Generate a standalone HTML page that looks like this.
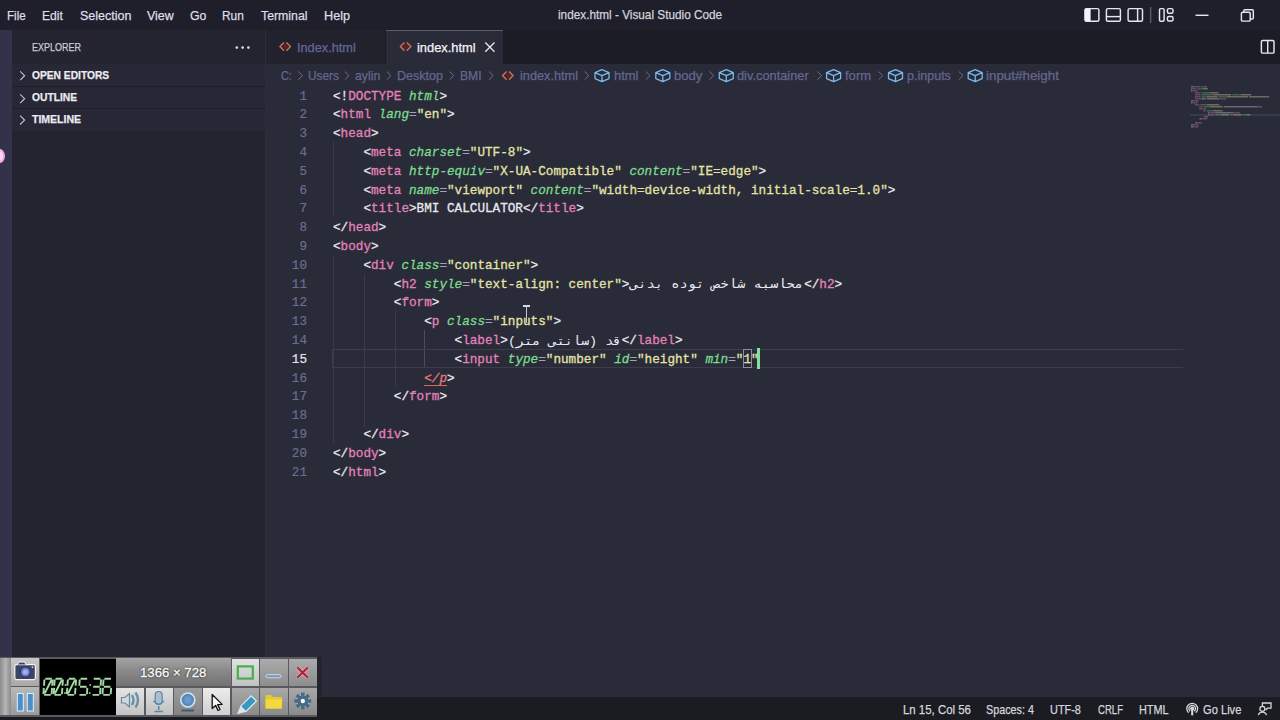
<!DOCTYPE html>
<html><head><meta charset="utf-8">
<style>
*{margin:0;padding:0;box-sizing:border-box}
html,body{width:1280px;height:720px;overflow:hidden;background:#2a2b38;font-family:"Liberation Sans",sans-serif;position:relative}
.b{position:absolute}
.tx{position:absolute;white-space:pre;transform-origin:0 0;-webkit-text-stroke:0.25px currentColor}
.cl{position:absolute;left:332.5px;white-space:pre;font-family:"Liberation Mono",monospace;font-size:13.6px;line-height:13.6px;color:#e9e9f0;transform-origin:0 0;-webkit-text-stroke:0.3px currentColor}
.ln{position:absolute;left:267px;width:40px;text-align:right;white-space:pre;font-family:"Liberation Mono",monospace;font-size:13.6px;line-height:13.6px;transform-origin:100% 0;transform:scaleX(0.93);-webkit-text-stroke:0.2px currentColor}
.t{color:#e482bc}.a{color:#7adc8e;font-style:italic}.s{color:#e4e4a8}.e{color:#a8a0b8}
.err{color:#e67c7a;font-style:italic;text-decoration:underline;text-decoration-color:#d86a62;text-underline-offset:3px}
.ar{position:absolute;white-space:pre;font-family:"Liberation Mono",monospace;font-size:12.5px;line-height:14px;color:#e9e9f0;transform-origin:0 0;direction:rtl;unicode-bidi:isolate}
svg{position:absolute;overflow:visible}
.gd{position:absolute;width:1px;background:#393a4a}
</style></head><body>
<!-- backgrounds -->
<div class="b" style="left:0;top:0;width:1280px;height:30px;background:#1f1f2b"></div>
<div class="b" style="left:0;top:30px;width:12px;height:668px;background:#323348"></div>
<div class="b" style="left:12px;top:30px;width:253px;height:668px;background:#242431"></div>
<div class="b" style="left:12px;top:64px;width:253px;height:67px;background:#272735"></div>
<div class="b" style="left:12px;top:86px;width:253px;height:1px;background:#1d1d27"></div>
<div class="b" style="left:12px;top:108px;width:253px;height:1px;background:#1d1d27"></div>
<div class="b" style="left:265px;top:30px;width:1px;height:668px;background:#2c2c3a"></div>
<div class="b" style="left:266px;top:30px;width:1014px;height:34px;background:#1c1c25"></div>
<div class="b" style="left:266px;top:30px;width:119px;height:34px;background:#22222d"></div>
<div class="b" style="left:385px;top:30px;width:1px;height:34px;background:#1a1a22"></div>
<div class="b" style="left:386px;top:30px;width:117px;height:34px;background:#2a2b38"></div>
<div class="b" style="left:386px;top:30px;width:117px;height:1px;background:#5a5a6e"></div>
<div class="b" style="left:503px;top:30px;width:1px;height:34px;background:#1a1a22"></div>
<div class="b" style="left:0;top:697.4px;width:1280px;height:23px;background:#1b1b22"></div>

<!-- pink ring at left edge -->
<div class="b" style="left:-6px;top:149px;width:11px;height:14px;border-radius:50%;border:2.5px solid #f2a6e6;background:#f8d8f0"></div>

<!-- title bar icons -->
<svg style="left:0;top:0" width="1280" height="64">
 <g fill="none" stroke="#e6e6ee" stroke-width="1.45">
  <rect x="1084.9" y="8.6" width="14" height="12.6" rx="1.5"/>
  <rect x="1085" y="8.8" width="5.6" height="12.2" fill="#f4f4f8" stroke="none"/>
  <rect x="1106.4" y="8.6" width="14" height="12.6" rx="1.5"/>
  <line x1="1106.4" y1="16.6" x2="1120.4" y2="16.6"/>
  <rect x="1128.1" y="8.6" width="14.4" height="12.6" rx="1.5"/>
  <line x1="1137.6" y1="8.6" x2="1137.6" y2="21.2"/>
  <line x1="1150.6" y1="7" x2="1150.6" y2="23" stroke="#5a5a68"/>
  <rect x="1159.5" y="8.6" width="4.6" height="12.6" rx="1.2"/>
  <rect x="1167.4" y="8.6" width="5.6" height="4.6" rx="1.5"/>
  <rect x="1167.4" y="16.4" width="5.6" height="4.6" rx="1.5"/>
  <line x1="1195.5" y1="15.3" x2="1208.5" y2="15.3"/>
  <rect x="1241.4" y="12.3" width="8.8" height="8.8" rx="1.2"/>
  <path d="M1243.8 12.3 V10.8 a1 1 0 0 1 1 -1 H1252.3 a1 1 0 0 1 1 1 V18 a1 1 0 0 1 -1 1 H1250.2"/>
  <!-- split editor -->
  <rect x="1261.4" y="40.5" width="12.6" height="12.6" rx="1.2"/>
  <line x1="1267.7" y1="40.5" x2="1267.7" y2="53.1"/>
 </g>
</svg>

<!-- sidebar icons -->
<svg style="left:0;top:0" width="270" height="140">
 <g fill="#dcdce4"><circle cx="236.8" cy="47.6" r="1.3"/><circle cx="242.6" cy="47.6" r="1.3"/><circle cx="248.4" cy="47.6" r="1.3"/></g>
 <g fill="none" stroke="#c8c8d2" stroke-width="1.1">
  <path d="M20.2 71.3 L24.6 75.7 L20.2 80.1"/>
  <path d="M20.2 94.3 L24.6 98.7 L20.2 103.1"/>
  <path d="M20.2 115.7 L24.6 120.1 L20.2 124.5"/>
 </g>
</svg>

<!-- tab icons -->
<svg style="left:0;top:0" width="1280" height="90">
 <g fill="none" stroke="#bc745c" stroke-width="1.5">
  <path d="M285.2 43.4 L282.4 46.6 L285.2 49.8 L288 46.6 Z" fill="#6e1c1c" stroke="none"/>
  <path d="M405.6 43.4 L402.8 46.6 L405.6 49.8 L408.4 46.6 Z" fill="#6e1c1c" stroke="none"/>
  <path d="M507.8 72.4 L505 75.6 L507.8 78.8 L510.6 75.6 Z" fill="#6e1c1c" stroke="none"/>
  <path d="M284 42.4 L280 46.6 L284 50.8"/><path d="M286.4 42.4 L290.4 46.6 L286.4 50.8"/>
  <path d="M404.4 42.4 L400.4 46.6 L404.4 50.8"/><path d="M406.8 42.4 L410.8 46.6 L406.8 50.8"/>
  <path d="M506.6 71.4 L502.6 75.6 L506.6 79.8"/><path d="M509 71.4 L513 75.6 L509 79.8"/>
 </g>
 <g stroke="#e8e8ee" stroke-width="1.3"><line x1="485.3" y1="42.5" x2="494.5" y2="51.7"/><line x1="494.5" y1="42.5" x2="485.3" y2="51.7"/></g>
 <g fill="none" stroke="#6a6c8e" stroke-width="1">
  <path d="M298.3 71.5 L302.5 75.6 L298.3 79.7"/>
  <path d="M344.8 71.5 L349 75.6 L344.8 79.7"/>
  <path d="M386.8 71.5 L391 75.6 L386.8 79.7"/>
  <path d="M449.6 71.5 L453.8 75.6 L449.6 79.7"/>
  <path d="M489 71.5 L493.2 75.6 L489 79.7"/>
  <path d="M584.6 71.5 L588.8 75.6 L584.6 79.7"/>
  <path d="M645.8 71.5 L650 75.6 L645.8 79.7"/>
  <path d="M709.4 71.5 L713.6 75.6 L709.4 79.7"/>
  <path d="M817.4 71.5 L821.6 75.6 L817.4 79.7"/>
  <path d="M878.6 71.5 L882.8 75.6 L878.6 79.7"/>
  <path d="M958.8 71.5 L963 75.6 L958.8 79.7"/>
 </g>
 <g fill="none" stroke="#79b8f0" stroke-width="1.3" stroke-linejoin="round">
  <g id="cube"><path d="M595 72.6 L602 69.6 L609 72.6 L609 78.6 L602 81.6 L595 78.6 Z M595 72.6 L602 75.6 L609 72.6 M602 75.6 L602 81.6"/></g>
  <use href="#cube" x="60.8"/>
  <use href="#cube" x="124.3"/>
  <use href="#cube" x="231.6"/>
  <use href="#cube" x="293.5"/>
  <use href="#cube" x="373.2"/>
 </g>
</svg>

<!-- indent guides -->
<div class="gd" style="left:333px;top:142px;height:75px"></div>
<div class="gd" style="left:333px;top:255px;height:188px"></div>
<div class="gd" style="left:364px;top:274px;height:153px"></div>
<div class="gd" style="left:394.5px;top:311px;height:76px"></div>
<div class="gd" style="left:424px;top:330px;height:38px;background:#4a4b5c"></div>
<!-- current line -->
<div class="b" style="left:332px;top:349px;width:851px;height:19px;border:1px solid #3c3d4c;border-right:none"></div>

<div class="cl" style="top:89.58px;transform:scaleX(0.9314)">&lt;!<span class="t">DOCTYPE</span> <span class="a">html</span>&gt;</div>
<div class="ln" style="top:89.58px;color:#6a6d92">1</div>
<div class="cl" style="top:108.38px;transform:scaleX(0.9314)">&lt;<span class="t">html</span> <span class="a">lang</span><span class="e">=</span><span class="s">&quot;en&quot;</span>&gt;</div>
<div class="ln" style="top:108.38px;color:#6a6d92">2</div>
<div class="cl" style="top:127.18px;transform:scaleX(0.9314)">&lt;<span class="t">head</span>&gt;</div>
<div class="ln" style="top:127.18px;color:#6a6d92">3</div>
<div class="cl" style="top:145.98px;transform:scaleX(0.9314)">    &lt;<span class="t">meta</span> <span class="a">charset</span><span class="e">=</span><span class="s">&quot;UTF-8&quot;</span>&gt;</div>
<div class="ln" style="top:145.98px;color:#6a6d92">4</div>
<div class="cl" style="top:164.78px;transform:scaleX(0.9314)">    &lt;<span class="t">meta</span> <span class="a">http-equiv</span><span class="e">=</span><span class="s">&quot;X-UA-Compatible&quot;</span> <span class="a">content</span><span class="e">=</span><span class="s">&quot;IE=edge&quot;</span>&gt;</div>
<div class="ln" style="top:164.78px;color:#6a6d92">5</div>
<div class="cl" style="top:183.58px;transform:scaleX(0.9314)">    &lt;<span class="t">meta</span> <span class="a">name</span><span class="e">=</span><span class="s">&quot;viewport&quot;</span> <span class="a">content</span><span class="e">=</span><span class="s">&quot;width=device-width, initial-scale=1.0&quot;</span>&gt;</div>
<div class="ln" style="top:183.58px;color:#6a6d92">6</div>
<div class="cl" style="top:202.38px;transform:scaleX(0.9314)">    &lt;<span class="t">title</span>&gt;BMI CALCULATOR&lt;/<span class="t">title</span>&gt;</div>
<div class="ln" style="top:202.38px;color:#6a6d92">7</div>
<div class="cl" style="top:221.18px;transform:scaleX(0.9314)">&lt;/<span class="t">head</span>&gt;</div>
<div class="ln" style="top:221.18px;color:#6a6d92">8</div>
<div class="cl" style="top:239.98px;transform:scaleX(0.9314)">&lt;<span class="t">body</span>&gt;</div>
<div class="ln" style="top:239.98px;color:#6a6d92">9</div>
<div class="cl" style="top:258.78px;transform:scaleX(0.9314)">    &lt;<span class="t">div</span> <span class="a">class</span><span class="e">=</span><span class="s">&quot;container&quot;</span>&gt;</div>
<div class="ln" style="top:258.78px;color:#6a6d92">10</div>
<div class="cl" style="top:277.58px;transform:scaleX(0.9314)">        &lt;<span class="t">h2</span> <span class="a">style</span><span class="e">=</span><span class="s">&quot;text-align: center&quot;</span>&gt;                       &lt;/<span class="t">h2</span>&gt;</div>
<div class="ln" style="top:277.58px;color:#6a6d92">11</div>
<div class="cl" style="top:296.38px;transform:scaleX(0.9314)">        &lt;<span class="t">form</span>&gt;</div>
<div class="ln" style="top:296.38px;color:#6a6d92">12</div>
<div class="cl" style="top:315.18px;transform:scaleX(0.9314)">            &lt;<span class="t">p</span> <span class="a">class</span><span class="e">=</span><span class="s">&quot;inputs&quot;</span>&gt;</div>
<div class="ln" style="top:315.18px;color:#6a6d92">13</div>
<div class="cl" style="top:333.98px;transform:scaleX(0.9314)">                &lt;<span class="t">label</span>&gt;               &lt;/<span class="t">label</span>&gt;</div>
<div class="ln" style="top:333.98px;color:#6a6d92">14</div>
<div class="cl" style="top:352.78px;transform:scaleX(0.9314)">                &lt;<span class="t">input</span> <span class="a">type</span><span class="e">=</span><span class="s">&quot;number&quot;</span> <span class="a">id</span><span class="e">=</span><span class="s">&quot;height&quot;</span> <span class="a">min</span><span class="e">=</span><span class="s">&quot;1&quot;</span></div>
<div class="ln" style="top:352.78px;color:#e6e6ee">15</div>
<div class="cl" style="top:371.58px;transform:scaleX(0.9314)">            <span class="err">&lt;/p</span>&gt;</div>
<div class="ln" style="top:371.58px;color:#6a6d92">16</div>
<div class="cl" style="top:390.38px;transform:scaleX(0.9314)">        &lt;/<span class="t">form</span>&gt;</div>
<div class="ln" style="top:390.38px;color:#6a6d92">17</div>
<div class="cl" style="top:409.18px;transform:scaleX(0.9314)"></div>
<div class="ln" style="top:409.18px;color:#6a6d92">18</div>
<div class="cl" style="top:427.98px;transform:scaleX(0.9314)">    &lt;/<span class="t">div</span>&gt;</div>
<div class="ln" style="top:427.98px;color:#6a6d92">19</div>
<div class="cl" style="top:446.78px;transform:scaleX(0.9314)">&lt;/<span class="t">body</span>&gt;</div>
<div class="ln" style="top:446.78px;color:#6a6d92">20</div>
<div class="cl" style="top:465.58px;transform:scaleX(0.9314)">&lt;/<span class="t">html</span>&gt;</div>
<div class="ln" style="top:465.58px;color:#6a6d92">21</div>
<div class="ar" style="left:629.5px;top:278.40px;transform:scaleX(1.095)" title="173.0">محاسبه شاخص توده بدنی</div>
<div class="ar" style="left:507.8px;top:334.80px;transform:scaleX(1.075)" title="113.2">قد (سانتی متر)</div>

<!-- bracket box + cursor -->
<div class="b" style="left:743.2px;top:348.6px;width:8.8px;height:19.6px;border:1px solid #8a8ca6"></div>
<div class="b" style="left:757.4px;top:348px;width:2.4px;height:21px;background:#7fe0a0"></div>
<!-- I-beam -->
<div class="b" style="left:523px;top:305.2px;width:7.4px;height:1.4px;background:#d8d8e2"></div>
<div class="b" style="left:526px;top:305.8px;width:1.4px;height:17px;background:#c8c8d2"></div>

<!-- minimap -->
<svg style="left:0;top:0" width="1280" height="140">
 <rect x="1190" y="114" width="90" height="2" fill="#3a4a5a" opacity="0.6"/>
 <g opacity="0.38">
 <rect x="1191.00" y="86" width="2.11" height="1.5" fill="#d0d0d8"/>
<rect x="1193.11" y="86" width="7.40" height="1.5" fill="#d070a8"/>
<rect x="1201.57" y="86" width="4.23" height="1.5" fill="#60c070"/>
<rect x="1205.80" y="86" width="1.06" height="1.5" fill="#d0d0d8"/>
<rect x="1191.00" y="88" width="1.06" height="1.5" fill="#d0d0d8"/>
<rect x="1192.06" y="88" width="4.23" height="1.5" fill="#d070a8"/>
<rect x="1197.34" y="88" width="4.23" height="1.5" fill="#60c070"/>
<rect x="1201.57" y="88" width="1.06" height="1.5" fill="#8a8aa0"/>
<rect x="1202.63" y="88" width="4.23" height="1.5" fill="#d8d8a0"/>
<rect x="1206.86" y="88" width="1.06" height="1.5" fill="#d0d0d8"/>
<rect x="1191.00" y="90" width="1.06" height="1.5" fill="#d0d0d8"/>
<rect x="1192.06" y="90" width="4.23" height="1.5" fill="#d070a8"/>
<rect x="1196.29" y="90" width="1.06" height="1.5" fill="#d0d0d8"/>
<rect x="1195.23" y="92" width="1.06" height="1.5" fill="#d0d0d8"/>
<rect x="1196.29" y="92" width="4.23" height="1.5" fill="#d070a8"/>
<rect x="1201.57" y="92" width="7.40" height="1.5" fill="#60c070"/>
<rect x="1208.97" y="92" width="1.06" height="1.5" fill="#8a8aa0"/>
<rect x="1210.03" y="92" width="7.40" height="1.5" fill="#d8d8a0"/>
<rect x="1217.42" y="92" width="1.06" height="1.5" fill="#d0d0d8"/>
<rect x="1195.23" y="94" width="1.06" height="1.5" fill="#d0d0d8"/>
<rect x="1196.29" y="94" width="4.23" height="1.5" fill="#d070a8"/>
<rect x="1201.57" y="94" width="10.57" height="1.5" fill="#60c070"/>
<rect x="1212.14" y="94" width="1.06" height="1.5" fill="#8a8aa0"/>
<rect x="1213.20" y="94" width="17.97" height="1.5" fill="#d8d8a0"/>
<rect x="1232.22" y="94" width="7.40" height="1.5" fill="#60c070"/>
<rect x="1239.62" y="94" width="1.06" height="1.5" fill="#8a8aa0"/>
<rect x="1240.68" y="94" width="9.51" height="1.5" fill="#d8d8a0"/>
<rect x="1250.19" y="94" width="1.06" height="1.5" fill="#d0d0d8"/>
<rect x="1195.23" y="96" width="1.06" height="1.5" fill="#d0d0d8"/>
<rect x="1196.29" y="96" width="4.23" height="1.5" fill="#d070a8"/>
<rect x="1201.57" y="96" width="4.23" height="1.5" fill="#60c070"/>
<rect x="1205.80" y="96" width="1.06" height="1.5" fill="#8a8aa0"/>
<rect x="1206.86" y="96" width="10.57" height="1.5" fill="#d8d8a0"/>
<rect x="1218.48" y="96" width="7.40" height="1.5" fill="#60c070"/>
<rect x="1225.88" y="96" width="1.06" height="1.5" fill="#8a8aa0"/>
<rect x="1226.94" y="96" width="21.14" height="1.5" fill="#d8d8a0"/>
<rect x="1249.13" y="96" width="19.03" height="1.5" fill="#d8d8a0"/>
<rect x="1268.16" y="96" width="1.06" height="1.5" fill="#d0d0d8"/>
<rect x="1195.23" y="98" width="1.06" height="1.5" fill="#d0d0d8"/>
<rect x="1196.29" y="98" width="5.29" height="1.5" fill="#d070a8"/>
<rect x="1201.57" y="98" width="4.23" height="1.5" fill="#d0d0d8"/>
<rect x="1206.86" y="98" width="12.68" height="1.5" fill="#d0d0d8"/>
<rect x="1219.54" y="98" width="5.29" height="1.5" fill="#d070a8"/>
<rect x="1224.82" y="98" width="1.06" height="1.5" fill="#d0d0d8"/>
<rect x="1191.00" y="100" width="2.11" height="1.5" fill="#d0d0d8"/>
<rect x="1193.11" y="100" width="4.23" height="1.5" fill="#d070a8"/>
<rect x="1197.34" y="100" width="1.06" height="1.5" fill="#d0d0d8"/>
<rect x="1191.00" y="102" width="1.06" height="1.5" fill="#d0d0d8"/>
<rect x="1192.06" y="102" width="4.23" height="1.5" fill="#d070a8"/>
<rect x="1196.29" y="102" width="1.06" height="1.5" fill="#d0d0d8"/>
<rect x="1195.23" y="104" width="1.06" height="1.5" fill="#d0d0d8"/>
<rect x="1196.29" y="104" width="3.17" height="1.5" fill="#d070a8"/>
<rect x="1200.51" y="104" width="5.29" height="1.5" fill="#60c070"/>
<rect x="1205.80" y="104" width="1.06" height="1.5" fill="#8a8aa0"/>
<rect x="1206.86" y="104" width="11.63" height="1.5" fill="#d8d8a0"/>
<rect x="1218.48" y="104" width="1.06" height="1.5" fill="#d0d0d8"/>
<rect x="1199.46" y="106" width="1.06" height="1.5" fill="#d0d0d8"/>
<rect x="1200.51" y="106" width="2.11" height="1.5" fill="#d070a8"/>
<rect x="1203.68" y="106" width="5.29" height="1.5" fill="#60c070"/>
<rect x="1208.97" y="106" width="1.06" height="1.5" fill="#8a8aa0"/>
<rect x="1210.03" y="106" width="12.68" height="1.5" fill="#d8d8a0"/>
<rect x="1223.77" y="106" width="7.40" height="1.5" fill="#d8d8a0"/>
<rect x="1231.17" y="106" width="1.06" height="1.5" fill="#d0d0d8"/>
<rect x="1232.22" y="106" width="24.31" height="1.5" fill="#d0d0d8"/>
<rect x="1256.53" y="106" width="2.11" height="1.5" fill="#d0d0d8"/>
<rect x="1258.65" y="106" width="2.11" height="1.5" fill="#d070a8"/>
<rect x="1260.76" y="106" width="1.06" height="1.5" fill="#d0d0d8"/>
<rect x="1199.46" y="108" width="1.06" height="1.5" fill="#d0d0d8"/>
<rect x="1200.51" y="108" width="4.23" height="1.5" fill="#d070a8"/>
<rect x="1204.74" y="108" width="1.06" height="1.5" fill="#d0d0d8"/>
<rect x="1203.68" y="110" width="1.06" height="1.5" fill="#d0d0d8"/>
<rect x="1204.74" y="110" width="1.06" height="1.5" fill="#d070a8"/>
<rect x="1206.86" y="110" width="5.29" height="1.5" fill="#60c070"/>
<rect x="1212.14" y="110" width="1.06" height="1.5" fill="#8a8aa0"/>
<rect x="1213.20" y="110" width="8.46" height="1.5" fill="#d8d8a0"/>
<rect x="1221.65" y="110" width="1.06" height="1.5" fill="#d0d0d8"/>
<rect x="1207.91" y="112" width="1.06" height="1.5" fill="#d0d0d8"/>
<rect x="1208.97" y="112" width="5.29" height="1.5" fill="#d070a8"/>
<rect x="1214.25" y="112" width="1.06" height="1.5" fill="#d0d0d8"/>
<rect x="1215.31" y="112" width="15.85" height="1.5" fill="#d0d0d8"/>
<rect x="1231.17" y="112" width="2.11" height="1.5" fill="#d0d0d8"/>
<rect x="1233.28" y="112" width="5.29" height="1.5" fill="#d070a8"/>
<rect x="1238.57" y="112" width="1.06" height="1.5" fill="#d0d0d8"/>
<rect x="1207.91" y="114" width="1.06" height="1.5" fill="#d0d0d8"/>
<rect x="1208.97" y="114" width="5.29" height="1.5" fill="#d070a8"/>
<rect x="1215.31" y="114" width="4.23" height="1.5" fill="#60c070"/>
<rect x="1219.54" y="114" width="1.06" height="1.5" fill="#8a8aa0"/>
<rect x="1220.60" y="114" width="8.46" height="1.5" fill="#d8d8a0"/>
<rect x="1230.11" y="114" width="2.11" height="1.5" fill="#60c070"/>
<rect x="1232.22" y="114" width="1.06" height="1.5" fill="#8a8aa0"/>
<rect x="1233.28" y="114" width="8.46" height="1.5" fill="#d8d8a0"/>
<rect x="1242.79" y="114" width="3.17" height="1.5" fill="#60c070"/>
<rect x="1245.96" y="114" width="1.06" height="1.5" fill="#8a8aa0"/>
<rect x="1247.02" y="114" width="3.17" height="1.5" fill="#d8d8a0"/>
<rect x="1203.68" y="116" width="3.17" height="1.5" fill="#e08070"/>
<rect x="1206.86" y="116" width="1.06" height="1.5" fill="#d0d0d8"/>
<rect x="1199.46" y="118" width="2.11" height="1.5" fill="#d0d0d8"/>
<rect x="1201.57" y="118" width="4.23" height="1.5" fill="#d070a8"/>
<rect x="1205.80" y="118" width="1.06" height="1.5" fill="#d0d0d8"/>
<rect x="1195.23" y="122" width="2.11" height="1.5" fill="#d0d0d8"/>
<rect x="1197.34" y="122" width="3.17" height="1.5" fill="#d070a8"/>
<rect x="1200.51" y="122" width="1.06" height="1.5" fill="#d0d0d8"/>
<rect x="1191.00" y="124" width="2.11" height="1.5" fill="#d0d0d8"/>
<rect x="1193.11" y="124" width="4.23" height="1.5" fill="#d070a8"/>
<rect x="1197.34" y="124" width="1.06" height="1.5" fill="#d0d0d8"/>
<rect x="1191.00" y="126" width="2.11" height="1.5" fill="#d0d0d8"/>
<rect x="1193.11" y="126" width="4.23" height="1.5" fill="#d070a8"/>
<rect x="1197.34" y="126" width="1.06" height="1.5" fill="#d0d0d8"/>
 </g>
</svg>

<div class="tx" style="left:7.30px;top:8.63px;font-size:13.08px;line-height:13.08px;transform:scaleX(0.8884);color:#dedee6;font-family:'Liberation Sans',sans-serif;">File</div>
<div class="tx" style="left:42.20px;top:8.63px;font-size:13.08px;line-height:13.08px;transform:scaleX(0.9244);color:#dedee6;font-family:'Liberation Sans',sans-serif;">Edit</div>
<div class="tx" style="left:79.50px;top:8.63px;font-size:13.08px;line-height:13.08px;transform:scaleX(0.9553);color:#dedee6;font-family:'Liberation Sans',sans-serif;">Selection</div>
<div class="tx" style="left:147.00px;top:8.63px;font-size:13.08px;line-height:13.08px;transform:scaleX(0.9485);color:#dedee6;font-family:'Liberation Sans',sans-serif;">View</div>
<div class="tx" style="left:189.60px;top:8.63px;font-size:13.08px;line-height:13.08px;transform:scaleX(0.9425);color:#dedee6;font-family:'Liberation Sans',sans-serif;">Go</div>
<div class="tx" style="left:222.20px;top:8.63px;font-size:13.08px;line-height:13.08px;transform:scaleX(0.9102);color:#dedee6;font-family:'Liberation Sans',sans-serif;">Run</div>
<div class="tx" style="left:260.90px;top:8.63px;font-size:13.08px;line-height:13.08px;transform:scaleX(0.9412);color:#dedee6;font-family:'Liberation Sans',sans-serif;">Terminal</div>
<div class="tx" style="left:324.20px;top:8.63px;font-size:13.08px;line-height:13.08px;transform:scaleX(0.9683);color:#dedee6;font-family:'Liberation Sans',sans-serif;">Help</div>
<div class="tx" style="left:558.20px;top:8.87px;font-size:12.79px;line-height:12.79px;transform:scaleX(0.9215);color:#d2d2da;font-family:'Liberation Sans',sans-serif;">index.html - Visual Studio Code</div>
<div class="tx" style="left:32.10px;top:41.88px;font-size:11.48px;line-height:11.48px;transform:scaleX(0.7827);color:#cdcdd6;font-family:'Liberation Sans',sans-serif;">EXPLORER</div>
<div class="tx" style="left:31.90px;top:69.13px;font-size:11.77px;line-height:11.77px;transform:scaleX(0.8702);color:#ececf2;font-family:'Liberation Sans',sans-serif;font-weight:bold;">OPEN EDITORS</div>
<div class="tx" style="left:32.00px;top:92.28px;font-size:11.48px;line-height:11.48px;transform:scaleX(0.8975);color:#ececf2;font-family:'Liberation Sans',sans-serif;font-weight:bold;">OUTLINE</div>
<div class="tx" style="left:32.00px;top:113.78px;font-size:11.48px;line-height:11.48px;transform:scaleX(0.9149);color:#ececf2;font-family:'Liberation Sans',sans-serif;font-weight:bold;">TIMELINE</div>
<div class="tx" style="left:297.20px;top:42.22px;font-size:12.50px;line-height:12.50px;transform:scaleX(1.0182);color:#63669a;font-family:'Liberation Sans',sans-serif;">Index.html</div>
<div class="tx" style="left:417.20px;top:42.22px;font-size:12.50px;line-height:12.50px;transform:scaleX(1.0272);color:#f4f4f8;font-family:'Liberation Sans',sans-serif;">index.html</div>
<div class="tx" style="left:280.60px;top:69.54px;font-size:12.35px;line-height:12.35px;transform:scaleX(0.8826);color:#64678f;font-family:'Liberation Sans',sans-serif;">C:</div>
<div class="tx" style="left:307.80px;top:69.54px;font-size:12.35px;line-height:12.35px;transform:scaleX(0.9612);color:#64678f;font-family:'Liberation Sans',sans-serif;">Users</div>
<div class="tx" style="left:354.70px;top:69.54px;font-size:12.35px;line-height:12.35px;transform:scaleX(0.9961);color:#64678f;font-family:'Liberation Sans',sans-serif;">aylin</div>
<div class="tx" style="left:396.90px;top:69.54px;font-size:12.35px;line-height:12.35px;transform:scaleX(1.0155);color:#64678f;font-family:'Liberation Sans',sans-serif;">Desktop</div>
<div class="tx" style="left:459.70px;top:69.54px;font-size:12.35px;line-height:12.35px;transform:scaleX(0.9841);color:#64678f;font-family:'Liberation Sans',sans-serif;">BMI</div>
<div class="tx" style="left:519.70px;top:69.54px;font-size:12.35px;line-height:12.35px;transform:scaleX(1.0302);color:#64678f;font-family:'Liberation Sans',sans-serif;">index.html</div>
<div class="tx" style="left:613.80px;top:69.54px;font-size:12.35px;line-height:12.35px;transform:scaleX(1.0493);color:#64678f;font-family:'Liberation Sans',sans-serif;">html</div>
<div class="tx" style="left:674.00px;top:69.54px;font-size:12.35px;line-height:12.35px;transform:scaleX(1.0597);color:#64678f;font-family:'Liberation Sans',sans-serif;">body</div>
<div class="tx" style="left:737.40px;top:69.54px;font-size:12.35px;line-height:12.35px;transform:scaleX(1.0376);color:#64678f;font-family:'Liberation Sans',sans-serif;">div.container</div>
<div class="tx" style="left:844.70px;top:69.54px;font-size:12.35px;line-height:12.35px;transform:scaleX(1.0567);color:#64678f;font-family:'Liberation Sans',sans-serif;">form</div>
<div class="tx" style="left:906.60px;top:69.54px;font-size:12.35px;line-height:12.35px;transform:scaleX(1.0150);color:#64678f;font-family:'Liberation Sans',sans-serif;">p.inputs</div>
<div class="tx" style="left:986.30px;top:69.54px;font-size:12.35px;line-height:12.35px;transform:scaleX(1.0847);color:#64678f;font-family:'Liberation Sans',sans-serif;">input#height</div>
<div class="tx" style="left:902.80px;top:703.77px;font-size:12.79px;line-height:12.79px;transform:scaleX(0.8926);color:#d6d6de;font-family:'Liberation Sans',sans-serif;">Ln 15, Col 56</div>
<div class="tx" style="left:986.00px;top:703.77px;font-size:12.79px;line-height:12.79px;transform:scaleX(0.8422);color:#d6d6de;font-family:'Liberation Sans',sans-serif;">Spaces: 4</div>
<div class="tx" style="left:1050.20px;top:703.77px;font-size:12.79px;line-height:12.79px;transform:scaleX(0.8532);color:#d6d6de;font-family:'Liberation Sans',sans-serif;">UTF-8</div>
<div class="tx" style="left:1097.50px;top:703.77px;font-size:12.79px;line-height:12.79px;transform:scaleX(0.7508);color:#d6d6de;font-family:'Liberation Sans',sans-serif;">CRLF</div>
<div class="tx" style="left:1139.40px;top:703.77px;font-size:12.79px;line-height:12.79px;transform:scaleX(0.8530);color:#d6d6de;font-family:'Liberation Sans',sans-serif;">HTML</div>
<div class="tx" style="left:1202.70px;top:703.77px;font-size:12.79px;line-height:12.79px;transform:scaleX(0.8714);color:#d6d6de;font-family:'Liberation Sans',sans-serif;">Go Live</div>

<!-- status icons -->
<svg style="left:0;top:690px" width="1280" height="30">
 <g fill="none" stroke="#d6d6de" stroke-width="1.3">
  <circle cx="1192.2" cy="18.6" r="1.4" fill="#d6d6de"/>
  <path d="M1190.1 21.2 a3.3 3.3 0 1 1 4.2 0"/>
  <path d="M1188.6 22.8 a5.4 5.4 0 1 1 7.2 0"/>
  <line x1="1192.2" y1="19.6" x2="1192.2" y2="25.4" stroke-width="2.1"/>
  <path d="M1262.4 16 V13 H1271 V18.2 H1267.4 L1265.6 20"/>
  <circle cx="1262.4" cy="18.8" r="2.5"/>
  <path d="M1258.3 25.2 a4.2 4 0 0 1 8.2 0"/>
 </g>
</svg>

<!-- bandicam toolbar -->
<div class="b shadowstrip" style="left:317px;top:657px;width:5px;height:41px;background:#24242e"></div>
<div class="b" style="left:0;top:657px;width:317.4px;height:60px;background:#5a5a5e"></div>
<div class="b" style="left:0;top:658px;width:10.5px;height:57px;background:linear-gradient(90deg,#8c8c8c,#b4b4b4 50%,#8a8a8a)"></div>
<div class="b" style="left:10.5px;top:658px;width:28.5px;height:28px;background:linear-gradient(180deg,#c8c8c8,#a8a8a8)"></div>
<div class="b" style="left:10.5px;top:686.5px;width:28.5px;height:28px;background:linear-gradient(180deg,#b8b8b8,#9a9a9a)"></div>
<div class="b" style="left:39.5px;top:658.5px;width:76.5px;height:56px;background:#000"></div>
<div class="b" style="left:116.3px;top:658.3px;width:115px;height:28.2px;background:linear-gradient(180deg,#a4a4a4,#8c8c8c 40%,#727272)"></div>
<div class="b" style="left:116.3px;top:687.5px;width:27.7px;height:27.2px;background:linear-gradient(180deg,#e4e4e4,#c4c4c4)"></div>
<div class="b" style="left:145.5px;top:687.5px;width:27.2px;height:27.2px;background:linear-gradient(180deg,#e0e0e0,#c0c0c0)"></div>
<div class="b" style="left:173.7px;top:687.5px;width:28.3px;height:27.2px;background:linear-gradient(180deg,#9c9c9c,#848484)"></div>
<div class="b" style="left:202.9px;top:687.5px;width:27.3px;height:27.2px;background:linear-gradient(180deg,#ececec,#d0d0d0)"></div>
<div class="b" style="left:231.7px;top:658.6px;width:27.2px;height:27.4px;background:linear-gradient(180deg,#e2e2e2,#c2c2c2)"></div>
<div class="b" style="left:259.5px;top:658.6px;width:28.5px;height:27.4px;background:linear-gradient(180deg,#ababab,#8e8e8e)"></div>
<div class="b" style="left:289px;top:658.6px;width:27.8px;height:27.4px;background:linear-gradient(180deg,#ababab,#8e8e8e)"></div>
<div class="b" style="left:231.7px;top:687.5px;width:27.2px;height:27.2px;background:linear-gradient(180deg,#a8a8a8,#8a8a8a)"></div>
<div class="b" style="left:259.5px;top:687.5px;width:28.5px;height:27.2px;background:linear-gradient(180deg,#a8a8a8,#8a8a8a)"></div>
<div class="b" style="left:289px;top:687.5px;width:27.8px;height:27.2px;background:linear-gradient(180deg,#a8a8a8,#8a8a8a)"></div>
<div class="tx" style="left:140.2px;top:666.2px;font-size:13.6px;line-height:14px;color:#f8f8f8;font-family:'Liberation Sans',sans-serif;text-shadow:0 0 1.5px #1a1a1a,0 0 2.5px #333;-webkit-text-stroke:0.35px #f8f8f8;transform:scaleX(0.97)">1366 × 728</div>
<svg style="left:0;top:650px" width="330" height="70">
 <!-- camera -->
 <rect x="14.8" y="14.6" width="20.6" height="15" rx="1.8" fill="#3c4466" stroke="#f4f4f4" stroke-width="1.2"/>
 <path d="M17.5 14.6 L19 12 H24.5 L26 14.6" fill="#3c4466" stroke="#f4f4f4" stroke-width="1"/>
 <circle cx="25.4" cy="22" r="5" fill="#6c7ad0" stroke="#2c3050" stroke-width="1"/>
 <circle cx="25.4" cy="22" r="2.6" fill="#a0aef0"/>
 <circle cx="32.5" cy="17.2" r="0.9" fill="#d0d0e0"/>
 <!-- pause -->
 <rect x="17.3" y="43.5" width="6" height="17.5" fill="#4c8fc8" stroke="#d8f0ff" stroke-width="1"/>
 <rect x="27.3" y="43.5" width="6" height="17.5" fill="#4c8fc8" stroke="#d8f0ff" stroke-width="1"/>
 <!-- timer -->
 <path d="M45.28 28.70 L51.88 28.70 M52.62 29.50 L52.19 35.70 M52.03 37.90 L51.60 44.10 M44.14 44.90 L50.74 44.90 M43.83 37.90 L43.40 44.10 M44.42 29.50 L43.99 35.70 M44.64 43.50 L51.38 30.10 M55.58 28.70 L62.18 28.70 M62.92 29.50 L62.49 35.70 M62.33 37.90 L61.90 44.10 M54.44 44.90 L61.04 44.90 M54.13 37.90 L53.70 44.10 M54.72 29.50 L54.29 35.70 M54.94 43.50 L61.68 30.10 M68.73 28.70 L75.33 28.70 M76.07 29.50 L75.64 35.70 M75.48 37.90 L75.05 44.10 M67.59 44.90 L74.19 44.90 M67.28 37.90 L66.85 44.10 M67.87 29.50 L67.44 35.70 M68.09 43.50 L74.83 30.10 M80.58 28.70 L87.18 28.70 M79.72 29.50 L79.29 35.70 M80.01 36.80 L86.61 36.80 M87.33 37.90 L86.90 44.10 M79.44 44.90 L86.04 44.90 M93.73 28.70 L100.33 28.70 M101.07 29.50 L100.64 35.70 M93.16 36.80 L99.76 36.80 M100.48 37.90 L100.05 44.10 M92.59 44.90 L99.19 44.90 M104.38 28.70 L110.98 28.70 M103.52 29.50 L103.09 35.70 M103.81 36.80 L110.41 36.80 M102.93 37.90 L102.50 44.10 M111.13 37.90 L110.70 44.10 M103.24 44.90 L109.84 44.90" fill="none" stroke="#a4d8a4" stroke-width="1.9" stroke-linecap="butt"/>
 <g fill="#9ed49e"><circle cx="65.5" cy="35" r="0.9"/><circle cx="65" cy="43" r="0.9"/><circle cx="90.2" cy="35" r="0.9"/><circle cx="89.7" cy="43" r="0.9"/></g>
 <!-- speaker -->
 <path d="M121.5 47.5 H125 L129.5 43.5 V57 L125 53 H121.5 Z" fill="#cfd8e0" stroke="#6a8aa0" stroke-width="1.2"/>
 <path d="M132 45 q3 5 0 10" fill="none" stroke="#6a8ea8" stroke-width="2.4"/>
 <path d="M135.5 42.5 q5 7.5 0 15" fill="none" stroke="#6a8ea8" stroke-width="2.4"/>
 <!-- mic -->
 <rect x="155.2" y="41.5" width="7" height="13" rx="3.5" fill="#a8c0d0" stroke="#5a86a8" stroke-width="1.2"/>
 <path d="M153.5 51 q5.2 6 10.4 0" fill="none" stroke="#5a86a8" stroke-width="1.2"/>
 <path d="M158.7 56 V60 M154.5 61.5 H163" stroke="#5a86a8" stroke-width="1.6"/>
 <!-- webcam -->
 <circle cx="187.8" cy="50" r="7" fill="#5a8ab8" stroke="#d0e4f0" stroke-width="1.6"/>
 <circle cx="187.8" cy="50" r="3.6" fill="#6a9ad0"/>
 <path d="M181.5 60.5 H194" stroke="#3a5a78" stroke-width="2"/>
 <!-- cursor -->
 <path d="M212.2 44.5 L212.2 58.5 L215.6 55.4 L218 60.5 L220 59.5 L217.7 54.6 L222.2 54.4 Z" fill="#f6f6f6" stroke="#111" stroke-width="1.3" stroke-linejoin="round"/>
 <!-- green rect -->
 <rect x="237.8" y="16.4" width="15" height="12.2" fill="none" stroke="#46b04c" stroke-width="2.2"/>
 <!-- minus -->
 <rect x="266" y="24.6" width="15" height="3.2" rx="1.6" fill="#7a9cb8" stroke="#d6eaf4" stroke-width="0.8"/>
 <!-- close x -->
 <path d="M297.4 17.6 L307.8 27.4 M307.8 17.6 L297.4 27.4" stroke="#f0b0c0" stroke-width="4" opacity="0.6"/>
 <path d="M297.4 17.6 L307.8 27.4 M307.8 17.6 L297.4 27.4" stroke="#b81c3a" stroke-width="2"/>
 <!-- pencil -->
 <path d="M240.6 56.4 L251.2 45.8 L256.4 51 L245.8 61.6 Z" fill="#3a98c0" stroke="#d8f0f8" stroke-width="1.1"/>
 <path d="M240.6 56.4 L245.8 61.6 L237.4 63.8 Z" fill="#e8e0e8" stroke="#d8f0f8" stroke-width="0.6"/>
 <!-- folder -->
 <path d="M265.5 45 H271 L273 47 H282 V58.5 H265.5 Z" fill="#e8c830"/>
 <path d="M265.5 49.5 H282.5 L281 58.5 H265.5 Z" fill="#f4d83c"/>
 <!-- gear -->
 <g transform="translate(302.8,51)">
  <circle r="6" fill="#4a6a84" stroke="#d8e8f0" stroke-width="0.8"/>
  <g fill="#4a6a84"><rect x="-1.8" y="-8.4" width="3.6" height="16.8"/><rect x="-8.4" y="-1.8" width="16.8" height="3.6"/><rect x="-1.8" y="-8.4" width="3.6" height="16.8" transform="rotate(45)"/><rect x="-1.8" y="-8.4" width="3.6" height="16.8" transform="rotate(-45)"/></g>
  <circle r="2.2" fill="#f0f8ff"/>
 </g>
</svg>

<script>
document.querySelectorAll('.ar').forEach(function(e){var w=parseFloat(e.getAttribute('title'));var r=e.offsetWidth;if(r>0){e.style.transform='scaleX('+(w/r)+')';}e.removeAttribute('title');});
</script>
</body></html>
